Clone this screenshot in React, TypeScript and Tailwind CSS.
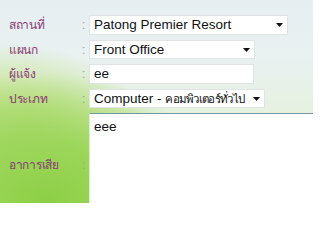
import React from 'react';

const font = { fontFamily: '"Liberation Sans", Tahoma, "Noto Sans", sans-serif' };

function Arrow() {
  return (
    <svg width="7" height="4" viewBox="0 0 7 4" className="shrink-0">
      <polygon points="0,0 7,0 3.5,4" fill="#111" />
    </svg>
  );
}

function Row({ label, h, children }: { label: string; h: string; children: React.ReactNode }) {
  return (
    <div className={`flex items-center ${h}`}>
      <span className="w-[73px] shrink-0 text-[12px] tracking-[-0.3px] text-[#8a3a76]">{label}</span>
      <span className="w-[7px] shrink-0 text-[12px] text-[#9aa0a0]">:</span>
      {children}
    </div>
  );
}

function Select({ children, w }: { children: React.ReactNode; w: string }) {
  return (
    <div className={`flex h-full ${w} items-center justify-between border border-[#dfe3e4] bg-white pl-[4px] pr-[4px]`}>
      <span className="whitespace-nowrap text-[13.5px] leading-none text-[#111]">{children}</span>
      <Arrow />
    </div>
  );
}

export default function App() {
  return (
    <div
      className="relative h-[203px] w-[313px] overflow-hidden bg-[radial-gradient(ellipse_170px_130px_at_15%_100%,#8ccf45_0%,#9cd65a_45%,transparent_100%),radial-gradient(ellipse_160px_110px_at_0%_75%,#acdb6e_0%,#c6e496_50%,transparent_100%),linear-gradient(180deg,#e6eef2_0%,#e9f1f1_28%,#e6f1e0_55%,#d8ebbd_100%)]"
      style={font}
    >
      <div className="flex flex-col gap-[5px] pl-[9px] pt-[15px]">
        <Row label="สถานที่" h="h-[20px]">
          <Select w="w-[199px]">Patong Premier Resort</Select>
        </Row>
        <Row label="แผนก" h="h-[19px]">
          <Select w="w-[166px]">Front Office</Select>
        </Row>
        <Row label="ผู้แจ้ง" h="h-[20px]">
          <div className="flex h-full w-[165px] items-center border border-[#dfe3e4] bg-white pl-[4px]">
            <span className="text-[13.5px] leading-none text-[#111]">ee</span>
          </div>
        </Row>
        <Row label="ประเภท" h="h-[19px]">
          <Select w="w-[176px]">
            Computer - <span className="text-[11.5px] tracking-[-0.7px]">คอมพิวเตอร์ทั่วไป</span>
          </Select>
        </Row>
        <Row label="อาการเสีย" h="h-[104px]">
          <div className="h-full w-[240px] border-l border-t border-l-[#e2e6e6] border-t-[#6f98a2] bg-white px-[4px] pt-[4px] leading-[16px]">
            <span className="text-[13.5px] text-[#111]">eee</span>
          </div>
        </Row>
      </div>
    </div>
  );
}
